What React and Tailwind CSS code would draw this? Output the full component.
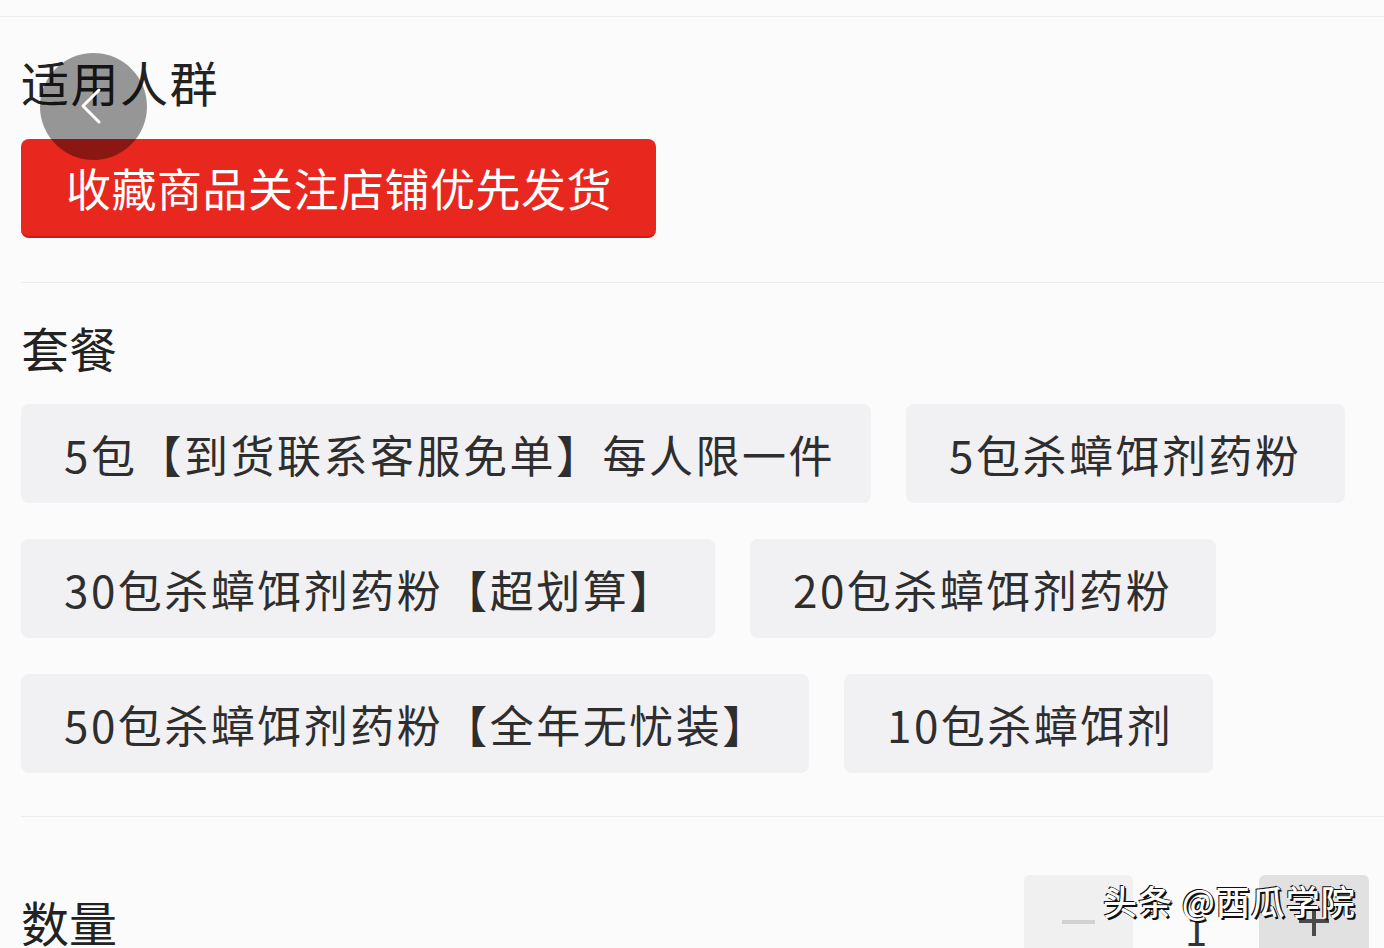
import React from "react";

const packages = [
  { label: "5包【到货联系客服免单】每人限一件", width: "w-[850px]" },
  { label: "5包杀蟑饵剂药粉", width: "w-[439px]" },
  { label: "30包杀蟑饵剂药粉【超划算】", width: "w-[694px]" },
  { label: "20包杀蟑饵剂药粉", width: "w-[466px]" },
  { label: "50包杀蟑饵剂药粉【全年无忧装】", width: "w-[788px]" },
  { label: "10包杀蟑饵剂", width: "w-[369px]" },
];

const App = () => {
  return (
    <div className="relative w-[1384px] h-[948px] overflow-hidden bg-[#fcfbfc] font-['Noto_Sans_CJK_SC',sans-serif] text-[#262626]">
      <div className="h-[16px]" />
      <div className="border-t border-[#ebebeb]" />

      <div className="pl-[21px]">
        {/* 适用人群 */}
        <div className="mt-[40px] text-[48px] leading-[48px] tracking-[1.5px] text-[#222]">适用人群</div>
        <div className="mt-[34px] w-[635px] h-[99px] flex items-center pl-[45px] rounded-[8px] bg-[#e8271f] border-b-2 border-[#c91d16] text-white text-[45px] tracking-[0.5px]">
          收藏商品关注店铺优先发货
        </div>

        <div className="mt-[44px] border-t border-[#ebebeb]" />

        {/* 套餐 */}
        <div className="mt-[40px] text-[48px] leading-[48px] text-[#222]">套餐</div>
        <div className="mt-[33px] flex flex-wrap gap-x-[35px] gap-y-[36px] pr-[21px]">
          {packages.map((p) => (
            <div
              key={p.label}
              className={`${p.width} h-[99px] flex items-center pl-[43px] rounded-[8px] bg-[#f1f0f3] text-[44px] tracking-[2.5px] text-[#2e2e2e] whitespace-nowrap`}
            >
              {p.label}
            </div>
          ))}
        </div>

        <div className="mt-[43px] border-t border-[#ebebeb]" />

        {/* 数量 */}
        <div className="mt-[58px] flex justify-between items-start pr-[15px]">
          <div className="mt-[22px] text-[48px] leading-[48px] text-[#222]">数量</div>
          <div className="flex items-stretch h-[80px]">
            <div className="w-[109px] flex items-center justify-center pt-[14px] rounded-t-[6px] bg-[#f0f0f1]">
              <div className="w-[33px] h-[4px] bg-[#d2d2d2]" />
            </div>
            <div className="w-[126px] flex items-end justify-center pb-[6px] text-[40px] leading-none text-[#333]">1</div>
            <div className="w-[110px] flex items-center justify-center pt-[12px] rounded-t-[6px] bg-[#e1e1e2]">
              <div className="relative w-[30px] h-[30px]">
                <div className="absolute left-0 top-[13px] w-[30px] h-[4px] bg-[#4a4a4a]" />
                <div className="absolute left-[13px] top-0 w-[4px] h-[30px] bg-[#4a4a4a]" />
              </div>
            </div>
          </div>
        </div>
      </div>

      {/* floating back button */}
      <div className="absolute left-[40px] top-[53px] w-[107px] h-[107px] rounded-full bg-black/40 flex items-center justify-center">
        <svg width="30" height="40" viewBox="0 0 30 40" fill="none" className="ml-[-4px] mt-[-2px]">
          <path d="M22 4 L6 20 L22 36" stroke="white" strokeWidth="3" strokeLinecap="round" strokeLinejoin="round" />
        </svg>
      </div>

      {/* watermark */}
      <div className="absolute left-[1103px] top-[881px] text-[34px] leading-[40px] tracking-[1px] font-medium text-white [text-shadow:2px_2px_0_#111,-1px_-1px_0_#111,1px_0_0_#111]">
        头条 @西瓜学院
      </div>
    </div>
  );
};

export default App;
